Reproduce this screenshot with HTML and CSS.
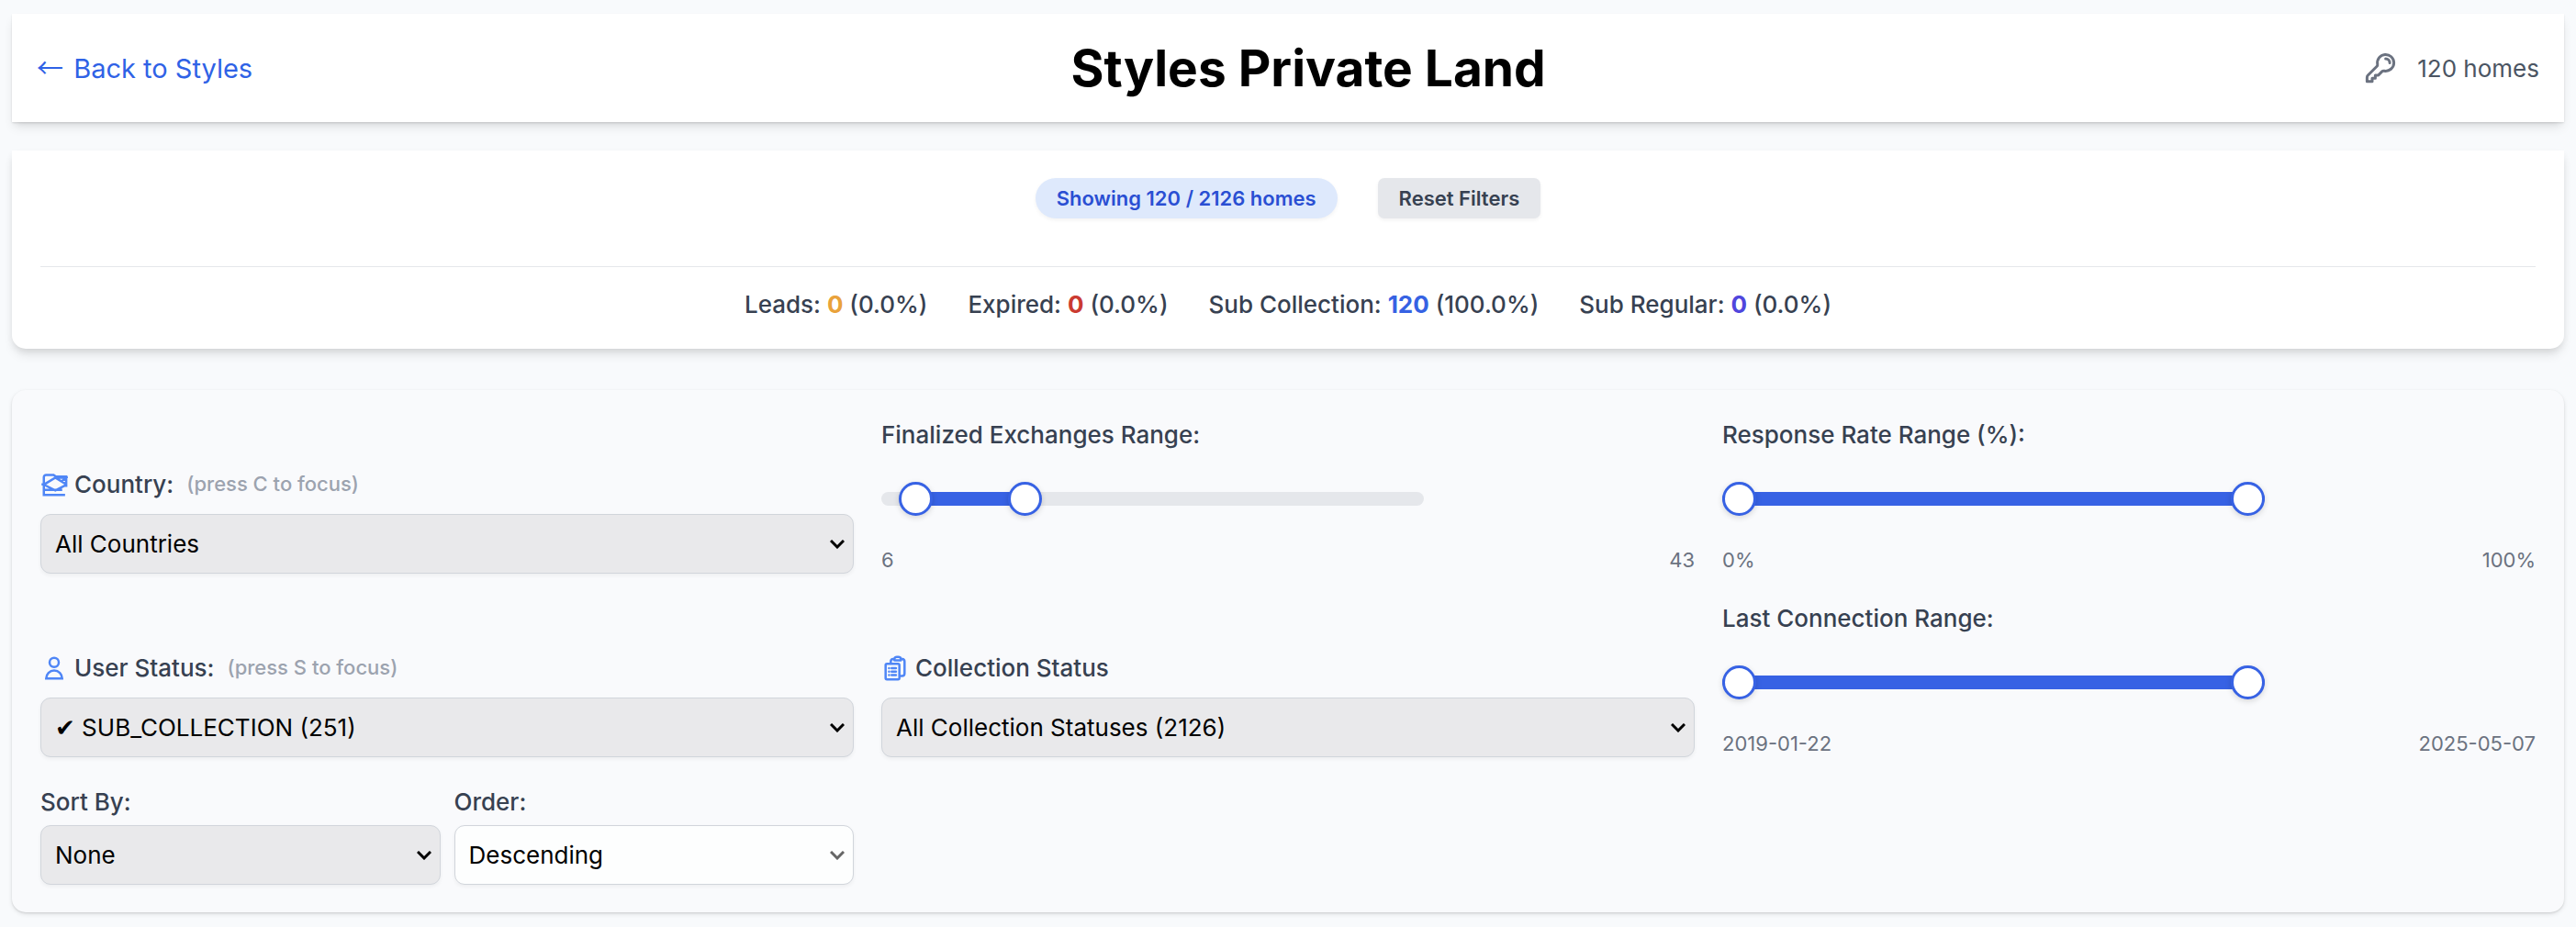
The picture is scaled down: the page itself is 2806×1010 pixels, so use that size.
FILE: index.html
```html
<!DOCTYPE html>
<html lang="en">
<head>
<meta charset="utf-8">
<title>Styles Private Land</title>
<link rel="stylesheet" href="styles.css">
</head>
<body>
<header class="topbar">
  <a class="back" href="#"><span class="arrow">←</span> Back to Styles</a>
  <h1 class="title">Styles Private Land</h1>
  <div class="count">
    <svg class="key" viewBox="0 0 24 24" aria-hidden="true"><path d="M15.75 5.25a3 3 0 013 3m3 0a6 6 0 01-7.029 5.912c-.563-.097-1.159.026-1.563.43L10.5 17.25H8.25v2.25H6v2.25H2.25v-2.818c0-.597.237-1.17.659-1.591l6.499-6.499c.404-.404.527-1 .43-1.563A6 6 0 1121.75 8.25z"/></svg>
    <span>120 homes</span>
  </div>
</header>

<section class="summary">
  <div class="summary-actions">
    <span class="pill">Showing 120 / 2126 homes</span>
    <button class="reset" type="button">Reset Filters</button>
  </div>
  <div class="stats">
    <span>Leads: <b class="leads">0</b> (0.0%)</span>
    <span>Expired: <b class="expired">0</b> (0.0%)</span>
    <span>Sub Collection: <b class="collection">120</b> (100.0%)</span>
    <span>Sub Regular: <b class="regular">0</b> (0.0%)</span>
  </div>
</section>

<form class="filters">
  <div class="field">
    <label class="label" for="country">
      <svg class="icon" viewBox="0 0 24 24" aria-hidden="true"><path d="M21.5 21H3V5.500a2 2 0 012-2h6.500l2 1.500h9v9M1 11.700h2.500L13 6l9.500 5.700M3 12l10 5 9-4.500M3 16.500h16M13 6h9.500l-4.500 3.500"/></svg>
      Country: <span class="hint">(press C to focus)</span>
    </label>
    <select id="country" class="select"><option>All Countries</option></select>
  </div>

  <div class="range-field" role="group" aria-labelledby="exchanges">
    <span class="label" id="exchanges">Finalized Exchanges Range:</span>
    <div class="slider">
      <div class="track"><div class="fill" style="left: 3.47%; right: 75.14%"></div></div>
      <input class="thumb" type="range" min="0" max="173" value="6" aria-label="Minimum exchanges">
      <input class="thumb" type="range" min="0" max="173" value="43" aria-label="Maximum exchanges">
    </div>
    <div class="bounds"><span>6</span><span>43</span></div>
  </div>

  <div class="range-field" role="group" aria-labelledby="response">
    <span class="label" id="response">Response Rate Range (%):</span>
    <div class="slider">
      <div class="track"><div class="fill" style="left: 0%; right: 0%"></div></div>
      <input class="thumb" type="range" min="0" max="100" value="0" aria-label="Minimum response rate">
      <input class="thumb" type="range" min="0" max="100" value="100" aria-label="Maximum response rate">
    </div>
    <div class="bounds"><span>0%</span><span>100%</span></div>
  </div>

  <div class="field">
    <label class="label" for="user-status">
      <svg class="icon" viewBox="0 0 24 24" aria-hidden="true"><path d="M16 7a4 4 0 11-8 0 4 4 0 018 0zM12 14a7 7 0 00-7 7h14a7 7 0 00-7-7z"/></svg>
      User Status: <span class="hint">(press S to focus)</span>
    </label>
    <select id="user-status" class="select"><option>✔ SUB_COLLECTION (251)</option></select>
  </div>

  <div class="field">
    <label class="label" for="collection-status">
      <svg class="icon" viewBox="0 0 24 24" aria-hidden="true" stroke-linecap="round" stroke-linejoin="round"><path d="M9 12h3.75M9 15h3.75M9 18h3.75m3 .75H18a2.25 2.25 0 002.25-2.25V6.108c0-1.135-.845-2.098-1.976-2.192a48.424 48.424 0 00-1.123-.08m-5.801 0c-.065.21-.1.433-.1.664 0 .414.336.75.75.75h4.5a.75.75 0 00.75-.75 2.25 2.25 0 00-.1-.664m-5.8 0A2.251 2.251 0 0113.5 2.25H15c1.012 0 1.867.668 2.15 1.586m-5.8 0c-.376.023-.75.05-1.124.08C9.095 4.01 8.25 4.973 8.25 6.108V8.25m0 0H4.875c-.621 0-1.125.504-1.125 1.125v11.25c0 .621.504 1.125 1.125 1.125h9.75c.621 0 1.125-.504 1.125-1.125V9.375c0-.621-.504-1.125-1.125-1.125H8.25zM6.75 12h.008v.008H6.75V12zm0 3h.008v.008H6.75V15zm0 3h.008v.008H6.75V18z"/></svg>
      Collection Status
    </label>
    <select id="collection-status" class="select"><option>All Collection Statuses (2126)</option></select>
  </div>

  <div class="range-field" role="group" aria-labelledby="connection">
    <span class="label" id="connection">Last Connection Range:</span>
    <div class="slider">
      <div class="track"><div class="fill" style="left: 0%; right: 0%"></div></div>
      <input class="thumb" type="range" min="0" max="100" value="0" aria-label="Earliest connection">
      <input class="thumb" type="range" min="0" max="100" value="100" aria-label="Latest connection">
    </div>
    <div class="bounds"><span>2019-01-22</span><span>2025-05-07</span></div>
  </div>

  <div class="sorting">
    <div class="field field-tight">
      <label class="label" for="sort">Sort By:</label>
      <select id="sort" class="select"><option>None</option></select>
    </div>
    <div class="field field-tight">
      <label class="label" for="order">Order:</label>
      <select id="order" class="select" disabled><option>Descending</option></select>
    </div>
  </div>
</form>
</body>
</html>
```
FILE: styles.css
```css
*, *::before, *::after { box-sizing: border-box; }

body {
  margin: 0;
  padding: 15px 13px;
  background: #f8fafc;
  color: #374151;
  font: 500 26px/37px Inter, "Liberation Sans", sans-serif;
}

.topbar {
  display: flex;
  align-items: center;
  justify-content: space-between;
  margin-bottom: 31px;
  padding: 26px 27px;
  background: #fff;
  box-shadow: 0 7px 11px -2px rgba(0, 0, 0, .1), 0 4px 7px -4px rgba(0, 0, 0, .1), 0 1px 2px rgba(0, 0, 0, .1);
}
.back { color: #2f62e6; font-size: 29px; font-weight: 400; line-height: 37px; text-decoration: none; }
.arrow { margin-right: 3px; font-family: "Noto Sans CJK JP", sans-serif; line-height: 1; }
.title { margin: 0; color: #000; font-size: 55px; font-weight: 700; line-height: 66px; }
.count { display: flex; align-items: center; gap: 22px; color: #4b5563; font-weight: 400; }
.key { width: 36px; height: 36px; fill: none; stroke: #6b7280; stroke-width: 2; stroke-linecap: round; stroke-linejoin: round; }

.summary {
  margin-bottom: 45px;
  padding: 30px 31px;
  background: #fff;
  border-radius: 0 0 15px 15px;
  box-shadow: 0 8px 12px -2px rgba(0, 0, 0, .1), 0 3px 8px -2px rgba(0, 0, 0, .1);
}
.summary-actions { display: flex; justify-content: center; gap: 44px; margin-bottom: 52px; }
.pill, .reset { padding: 4px 23px; font-size: 22px; font-weight: 600; line-height: 36px; box-shadow: 0 2px 4px rgba(0, 0, 0, .05); }
.pill { border-radius: 22px; background: #dee9fc; color: #2a4fd3; }
.reset { border: 0; border-radius: 7px; background: #e5e7eb; color: #374151; font-family: inherit; }
.stats { display: flex; justify-content: center; gap: 44px; padding-top: 22px; border-top: 1px solid #e5e7eb; }
.stats b { font-weight: 700; }
.leads { color: #e9a23b; }
.expired { color: #cb3a31; }
.collection { color: #3662e3; }
.regular { color: #5046dd; }

.filters {
  display: grid;
  grid-template-columns: repeat(3, 1fr);
  align-items: end;
  gap: 30px;
  padding: 30px 31px;
  background: #f9fafc;
  border-radius: 15px;
  box-shadow: 0 2px 5px rgba(0, 0, 0, .1), 0 1px 2px rgba(0, 0, 0, .1);
}
.field { display: flex; flex-direction: column; gap: 14px; min-width: 0; }
.field-tight { gap: 7px; }
.label { display: flex; align-items: center; gap: 7px; }
.icon { width: 30px; height: 30px; fill: none; stroke: #4f86f6; stroke-width: 2; }
.hint { margin-left: 7px; color: #9ca3af; font-size: 22px; }

.select {
  appearance: none;
  width: 100%;
  height: 65px;
  padding: 0 36px 0 15px;
  border: 1px solid #d1d5db;
  border-radius: 11px;
  background: #e9e9eb url("data:image/svg+xml,%3Csvg xmlns='http://www.w3.org/2000/svg' width='16' height='10' fill='none' stroke='%23000' stroke-width='3'%3E%3Cpath d='M1 1l7 7 7-7'/%3E%3C/svg%3E") no-repeat right 9px center;
  box-shadow: 0 2px 4px rgba(0, 0, 0, .05);
  color: #000;
  font: 400 26px/37px Inter, "DejaVu Sans", sans-serif;
}
.select:disabled {
  background-color: #fdfefe;
  background-image: url("data:image/svg+xml,%3Csvg xmlns='http://www.w3.org/2000/svg' width='16' height='10' fill='none' stroke='%23666' stroke-width='3'%3E%3Cpath d='M1 1l7 7 7-7'/%3E%3C/svg%3E");
  opacity: 1;
}

.slider { position: relative; display: flex; align-items: center; width: 591px; max-width: 100%; height: 103px; }
.track { position: relative; flex: 1; height: 15px; overflow: hidden; border-radius: 8px; background: #e5e7eb; }
.fill { position: absolute; top: 0; bottom: 0; background: #3762e4; }
.thumb { appearance: none; position: absolute; inset: 0; width: 100%; height: 100%; margin: 0; background: none; pointer-events: none; }
.thumb::-webkit-slider-thumb {
  appearance: none;
  width: 37px;
  height: 37px;
  border: 3px solid #3762e4;
  border-radius: 50%;
  background: #fff;
  box-shadow: 0 2px 6px rgba(0, 0, 0, .15);
  pointer-events: auto;
}
.bounds { display: flex; justify-content: space-between; color: #6b7280; font-size: 22px; font-weight: 400; line-height: 30px; }
.sorting { display: grid; grid-template-columns: 1fr 1fr; gap: 15px; }
```
